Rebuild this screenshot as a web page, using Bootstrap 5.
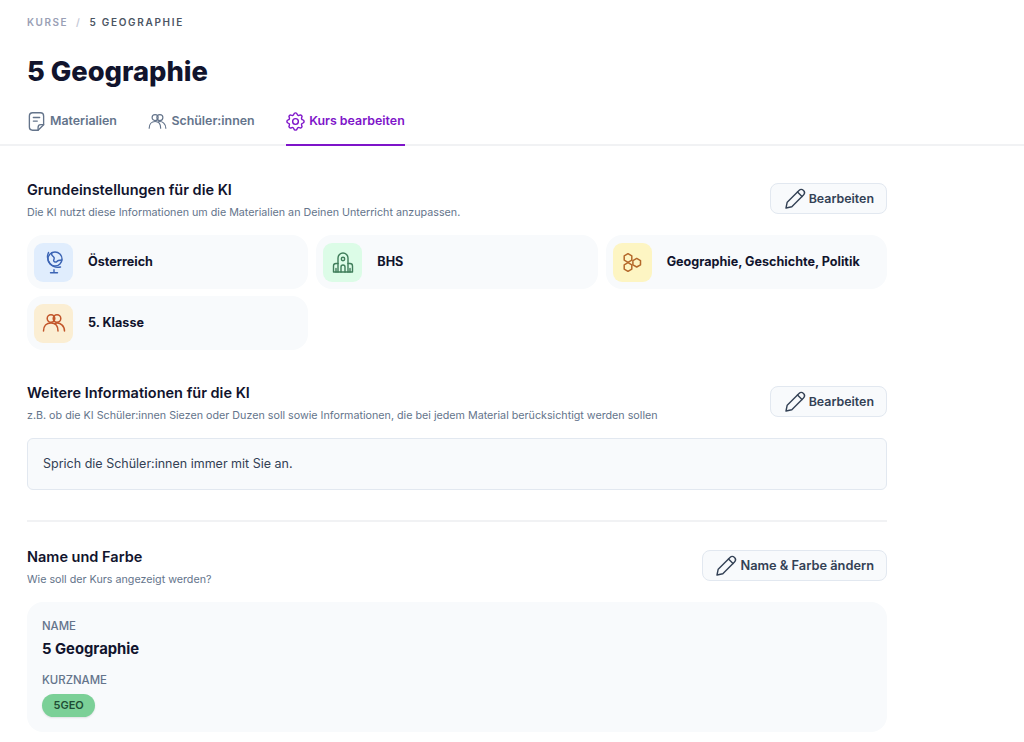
<!DOCTYPE html>
<html lang="de">
<head>
  <meta charset="UTF-8" />
  <meta name="viewport" content="width=device-width, initial-scale=1" />
  <title>5 Geographie</title>
  <link href="https://cdn.jsdelivr.net/npm/bootstrap@5.3.0/dist/css/bootstrap.min.css" rel="stylesheet" />
  <style>
    body { font-family: Inter, "Liberation Sans", sans-serif; color: #11142d; overflow: hidden; }
    .page-head { padding: 0 27px; }
    .crumbs { padding-top: 16px; height: 43px; font-size: 10px; font-weight: 600; letter-spacing: 1.7px; line-height: 13px; color: #4b5563; }
    .crumbs .muted-crumb { color: #9a9fb5; letter-spacing: 1.5px; }
    .crumbs .sep { color: #c4c8d6; margin: 0 8px; }
    .page-title { font-size: 27.3px; font-weight: 800; line-height: 32px; margin: 13px 0 0; color: #11142d; }
    .tab-row { border-bottom: 2px solid #f1f2f4; margin-top: 9px; padding: 0 27px; gap: 31.5px; height: 49px; }
    .tab-item { display: flex; align-items: center; gap: 4px; height: 49px; padding-top: 1px; padding-bottom: 1px; font-size: 12.4px; font-weight: 600; color: #64748b; margin-bottom: -2px; }
    .tab-item.active-tab { color: #7e14c9; border-bottom: 2px solid #7e14c9; padding-bottom: 0; }
    .tab-item svg { width: 19px; height: 19px; }
    .main-col { width: 860px; margin-left: 27px; }
    .sec-title { font-size: 14.5px; font-weight: 600; line-height: 20px; margin: 0; color: #11142d; }
    .sec-sub { font-size: 10.72px; line-height: 14px; color: #64748b; margin: 6px 0 0; }
    .edit-btn { display: flex; align-items: center; gap: 2px; height: 31px; margin-top: 3px; padding: 1px 12px 0; font-size: 12.4px; font-weight: 600; color: #334155; background: #f8fafc; border: 1px solid #e2e8f0; border-radius: 8px; }
    .edit-btn svg { width: 24px; height: 24px; margin-top: -1px; }
    .edit-btn.edit-wide { font-size: 12.8px; padding-left: 11px; }
    .info-grid { display: grid; grid-template-columns: repeat(3, 1fr); gap: 7px 8px; margin-top: 15px; }
    .info-tile { display: flex; align-items: center; gap: 15px; height: 54px; padding: 0 7px; background: #f8fafc; border-radius: 16px; font-size: 12.6px; font-weight: 700; color: #11142d; }
    .tile-icon { width: 39px; height: 39px; border-radius: 9px; display: flex; align-items: center; justify-content: center; flex: none; }
    .tile-icon svg { width: 24px; height: 24px; }
    .note-box { margin-top: 15px; height: 52px; padding: 0 15px; display: flex; align-items: center; background: #f8fafc; border: 1px solid #e2e8f0; border-radius: 6px; font-size: 12.5px; color: #334155; }
    .divider-line { border-top: 2px solid #f1f2f4; margin: 30px 0 0; }
    .name-card { margin-top: 15px; padding: 17px 15px; height: 130px; background: #f8fafc; border-radius: 16px; }
    .field-label { font-size: 11.4px; font-weight: 500; line-height: 14px; color: #64748b; }
    .field-value { font-size: 14.8px; font-weight: 700; line-height: 18px; margin-top: 7px; color: #11142d; }
    .field-label.field-second { margin-top: 15px; }
    .short-pill { display: inline-block; margin-top: 7px; height: 23px; line-height: 23px; padding: 0 11.5px; border-radius: 12px; background: #7bd097; font-size: 11px; font-weight: 600; color: #1f4d35; box-shadow: 0 1px 2px rgba(0,0,0,.1); }
  </style>
</head>
<body>
  <div class="page-head">
    <div class="crumbs"><span class="muted-crumb">KURSE</span><span class="sep">/</span>5 GEOGRAPHIE</div>
    <h1 class="page-title">5 Geographie</h1>
  </div>
  <div class="tab-row d-flex">
    <div class="tab-item">
      <svg viewBox="0 0 24 24" fill="none" stroke="currentColor" stroke-width="1.7" stroke-linecap="round" stroke-linejoin="round"><path d="M14 23H7a4 4 0 0 1-4-4V5a4 4 0 0 1 4-4h10a4 4 0 0 1 4 4v11z"/><path d="M14 23v-3.500a3.500 3.500 0 0 1 3.500-3.500H21"/><path d="M8 7h8M8 11.500h5"/></svg>
      Materialien
    </div>
    <div class="tab-item">
      <svg viewBox="0 0 24 24" fill="none" stroke="currentColor" stroke-width="1.5" stroke-linecap="round" stroke-linejoin="round"><circle cx="9" cy="7" r="3.800"/><circle cx="15" cy="7" r="3.800"/><path d="M1.500 20.500c0-5 3-8.500 7.500-8.500s7 3.500 7 8.500"/><path d="M13.500 12.200c5-1 9 3 9 8.300"/></svg>
      Schüler:innen
    </div>
    <div class="tab-item active-tab">
      <svg viewBox="2 2 20 20" fill="none" stroke="currentColor" stroke-width="1.5" stroke-linecap="round" stroke-linejoin="round"><circle cx="12" cy="12" r="3"/><path d="M10.300 4.300c.4-1.800 3-1.800 3.400 0a1.700 1.700 0 0 0 2.600 1.100c1.500-.9 3.300.8 2.300 2.300a1.700 1.700 0 0 0 1.100 2.600c1.800.4 1.800 3 0 3.400a1.700 1.700 0 0 0-1.100 2.600c.9 1.500-.8 3.300-2.300 2.300a1.700 1.700 0 0 0-2.600 1.100c-.4 1.800-3 1.800-3.400 0a1.700 1.700 0 0 0-2.600-1.100c-1.500.9-3.300-.8-2.300-2.300a1.700 1.700 0 0 0-1.100-2.600c-1.800-.4-1.800-3 0-3.400a1.700 1.700 0 0 0 1.100-2.600c-.9-1.500.8-3.300 2.300-2.300a1.700 1.700 0 0 0 2.600-1.100z"/></svg>
      Kurs bearbeiten
    </div>
  </div>

  <div class="main-col">
    <section style="padding-top: 34px">
      <div class="d-flex justify-content-between align-items-start">
        <div>
          <h2 class="sec-title">Grundeinstellungen für die KI</h2>
          <p class="sec-sub">Die KI nutzt diese Informationen um die Materialien an Deinen Unterricht anzupassen.</p>
        </div>
        <button class="edit-btn" type="button">
          <svg viewBox="0 0 24 24" fill="none" stroke="currentColor" stroke-width="1.4" stroke-linecap="round" stroke-linejoin="round"><path d="M3 21l1.200-5.800L16 3.500a2.800 2.800 0 0 1 4.500 4.500L8.800 19.800z"/><path d="M14.500 5l4.500 4.500"/></svg>
          Bearbeiten
        </button>
      </div>
      <div class="info-grid">
        <div class="info-tile">
          <span class="tile-icon" style="background:#e0edfd;color:#3b64b4">
            <svg viewBox="0 0 24 24" fill="none" stroke="currentColor" stroke-width="1.4" stroke-linecap="round" stroke-linejoin="round"><circle cx="13" cy="9" r="7"/><path d="M6.500 2.500a10.500 10.500 0 0 0 12 14.500"/><path d="M12 19.800v3M8.500 22.800h7"/><path d="M10 2.700c-1.500 2.300 1 3.300 2 4.800s-2 3.500 1 4.500c1.500.5 2-1 3.500-1.500s2.500-.5 3.500-.5"/></svg>
          </span>
          Österreich
        </div>
        <div class="info-tile">
          <span class="tile-icon" style="background:#dcfce7;color:#3f7d5a">
            <svg viewBox="0 0 24 24" fill="none" stroke="currentColor" stroke-width="1.4" stroke-linecap="round" stroke-linejoin="round"><path d="M7 22V8a5 5 0 0 1 10 0v14"/><circle cx="12" cy="9" r="1.700"/><path d="M10 22v-5a2 2 0 0 1 4 0v5"/><path d="M7 13.500H5a2.500 2.500 0 0 0-2.500 2.500v6h19v-6a2.500 2.500 0 0 0-2.500-2.500h-2"/><path d="M5 22v-3.500M19 22v-3.500"/></svg>
          </span>
          BHS
        </div>
        <div class="info-tile">
          <span class="tile-icon" style="background:#fdf5c3;color:#b4682a">
            <svg viewBox="0 0 24 24" fill="none" stroke="currentColor" stroke-width="1.500" stroke-linejoin="round"><path d="M8 3.700l3.800 2.200v4.200L8 12.300l-3.800-2.200V5.900z"/><path d="M8 12.700l3.800 2.200v4.200L8 21.300l-3.800-2.200v-4.200z"/><path d="M16.700 8.400l3.800 2.200v4.200l-3.800 2.200-3.800-2.200v-4.200z"/></svg>
          </span>
          Geographie, Geschichte, Politik
        </div>
        <div class="info-tile">
          <span class="tile-icon" style="background:#fbeed3;color:#c2552a">
            <svg viewBox="0 0 24 24" fill="none" stroke="currentColor" stroke-width="1.500" stroke-linecap="round" stroke-linejoin="round"><circle cx="9" cy="7.500" r="3.800"/><circle cx="15" cy="7.500" r="3.800"/><path d="M1.500 20c0-5 3-8 7.500-8s7 3 7 8"/><path d="M13.500 12.300c5-1 9 2.500 9 7.700"/></svg>
          </span>
          5. Klasse
        </div>
      </div>
    </section>

    <section style="padding-top: 33px">
      <div class="d-flex justify-content-between align-items-start">
        <div>
          <h2 class="sec-title">Weitere Informationen für die KI</h2>
          <p class="sec-sub">z.B. ob die KI Schüler:innen Siezen oder Duzen soll sowie Informationen, die bei jedem Material berücksichtigt werden sollen</p>
        </div>
        <button class="edit-btn" type="button">
          <svg viewBox="0 0 24 24" fill="none" stroke="currentColor" stroke-width="1.4" stroke-linecap="round" stroke-linejoin="round"><path d="M3 21l1.200-5.800L16 3.500a2.800 2.800 0 0 1 4.500 4.500L8.800 19.800z"/><path d="M14.500 5l4.500 4.500"/></svg>
          Bearbeiten
        </button>
      </div>
      <div class="note-box">Sprich die Schüler:innen immer mit Sie an.</div>
    </section>

    <div class="divider-line"></div>

    <section style="padding-top: 25px">
      <div class="d-flex justify-content-between align-items-start">
        <div>
          <h2 class="sec-title">Name und Farbe</h2>
          <p class="sec-sub">Wie soll der Kurs angezeigt werden?</p>
        </div>
        <button class="edit-btn edit-wide" type="button">
          <svg viewBox="0 0 24 24" fill="none" stroke="currentColor" stroke-width="1.4" stroke-linecap="round" stroke-linejoin="round"><path d="M3 21l1.200-5.800L16 3.500a2.800 2.800 0 0 1 4.500 4.500L8.800 19.800z"/><path d="M14.500 5l4.500 4.500"/></svg>
          Name &amp; Farbe ändern
        </button>
      </div>
      <div class="name-card">
        <div class="field-label">NAME</div>
        <div class="field-value">5 Geographie</div>
        <div class="field-label field-second">KURZNAME</div>
        <span class="short-pill">5GEO</span>
      </div>
    </section>
  </div>
  <script src="https://cdn.jsdelivr.net/npm/bootstrap@5.3.0/dist/js/bootstrap.bundle.min.js"></script>
</body>
</html>
